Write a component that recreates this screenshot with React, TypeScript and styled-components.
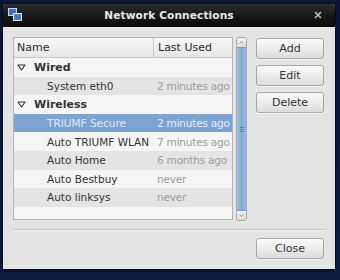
import React from 'react';
import styled, {createGlobalStyle} from 'styled-components';

const GlobalStyle = createGlobalStyle`
  html, body {
    margin: 0;
    padding: 0;
    background: linear-gradient(180deg, #0c1634 0%, #0e1c44 100%);
    font-family: "DejaVu Sans", "Liberation Sans", sans-serif;
  }
`

const Screen = styled.div`
  width: 340px;
  height: 280px;
  padding: 4px 5px 0 3px;
  box-sizing: border-box;
`

const Window = styled.div`
  width: 332px;
  height: 265px;
  display: flex;
  flex-direction: column;
  background: #e4e4e4;
  border-radius: 4px 4px 0 0;
  box-shadow: 0 0 0 1px #050a18, 0 2px 3px rgba(0, 0, 0, 0.6);
  overflow: hidden;
`

const TitleBar = styled.div`
  height: 22px;
  flex: none;
  display: grid;
  grid-template-columns: 22px 1fr 22px;
  align-items: center;
  background: linear-gradient(180deg, #2c2c2e 0%, #151516 60%, #0c0c0c 100%);
  border-bottom: 1px solid #000;
`

const Title = styled.div`
  text-align: center;
  color: #e8e8e8;
  font-size: 10.6px;
  font-weight: bold;
  letter-spacing: 0.1px;
`

const Body = styled.div`
  flex: 1;
  display: flex;
  flex-direction: column;
  padding: 10px 11px 0 10px;
`

const Main = styled.div`
  display: flex;
  gap: 3px;
`

const Tree = styled.div`
  width: 223px;
  height: 183px;
  box-sizing: border-box;
  border: 1px solid #b4b4b4;
  background: #f5f5f5;
  display: flex;
  flex-direction: column;
  overflow: hidden;
`

const HeaderRow = styled.div`
  height: 19px;
  flex: none;
  display: grid;
  grid-template-columns: 139px 1fr;
  background: linear-gradient(180deg, #f7f7f7 0%, #e6e6e6 100%);
  border-bottom: 1px solid #c9c9c9;
`

const HeaderCell = styled.div<{$divider?: boolean}>`
  font-size: 11px;
  color: #2a2a2a;
  display: flex;
  align-items: center;
  padding-left: ${p => (p.$divider ? '4px' : '3px')};
  border-left: ${p => (p.$divider ? '1px solid #c4c4c4' : 'none')};
`

const Row = styled.div<{$alt?: boolean; $selected?: boolean}>`
  height: 18.6px;
  flex: none;
  display: grid;
  grid-template-columns: 140px 1fr;
  align-items: center;
  font-size: 10.5px;
  background: ${p => (p.$selected ? '#7ca3d4' : p.$alt ? '#e4e4e4' : '#f5f5f5')};
`

const NameCell = styled.div<{$group?: boolean; $selected?: boolean}>`
  display: flex;
  align-items: center;
  gap: 8px;
  padding-left: ${p => (p.$group ? '3px' : '33px')};
  font-weight: ${p => (p.$group ? 'bold' : 'normal')};
  font-size: ${p => (p.$group ? '11px' : '10.5px')};
  color: ${p => (p.$selected ? '#dfe9f6' : '#333')};
  white-space: nowrap;
`

const UsedCell = styled.div<{$selected?: boolean}>`
  padding-left: 3px;
  letter-spacing: -0.2px;
  color: ${p => (p.$selected ? '#e3ecf8' : '#9c9c9c')};
  white-space: nowrap;
`

const ScrollBar = styled.div`
  width: 11px;
  height: 184px;
  box-sizing: border-box;
  border: 1px solid #a9a9a9;
  border-radius: 3px;
  background: #dcdcdc;
  display: flex;
  flex-direction: column;
  overflow: hidden;
`

const Stepper = styled.div`
  height: 9px;
  flex: none;
  display: flex;
  align-items: center;
  justify-content: center;
  background: linear-gradient(180deg, #f2f2f2, #dadada);
`

const Thumb = styled.div`
  flex: 1;
  display: flex;
  flex-direction: column;
  align-items: center;
  justify-content: center;
  gap: 1px;
  background: linear-gradient(90deg, #9fbde4 0%, #82a8da 50%, #9ab9e2 100%);
  border-top: 1px solid #7a9ccc;
  border-bottom: 1px solid #7a9ccc;
`

const Grip = styled.div`
  width: 4px;
  height: 1px;
  background: #5f82b6;
`

const Buttons = styled.div`
  margin-left: 6px;
  margin-top: 1px;
  display: flex;
  flex-direction: column;
  gap: 6px;
`

const Button = styled.button`
  width: 68px;
  height: 21px;
  box-sizing: border-box;
  border: 1px solid #a6a6a6;
  border-radius: 3px;
  background: linear-gradient(180deg, #fafafa 0%, #ececec 50%, #dcdcdc 100%);
  font-family: "DejaVu Sans", "Liberation Sans", sans-serif;
  font-size: 11px;
  color: #333;
  padding: 0;
  box-shadow: 0 1px 0 rgba(255, 255, 255, 0.6);
`

const Separator = styled.div`
  margin: 8px -2px 0 -1px;
  height: 1px;
  background: #c8c8c8;
  border-bottom: 1px solid #f2f2f2;
`

const Footer = styled.div`
  display: flex;
  justify-content: flex-end;
  padding-top: 7px;
`

function AppIcon() {
  return (
    <svg width="14" height="14" viewBox="0 0 14 14" style={{marginLeft: 5}}>
      <rect x="0.5" y="0.5" width="8" height="7" fill="#5d86c4" stroke="#c9d6ea" />
      <rect x="1.5" y="1.5" width="6" height="5" fill="#3d6cb5" />
      <rect x="5.5" y="5.5" width="8" height="7" fill="#6d93cf" stroke="#d6e0ef" />
      <rect x="6.5" y="6.5" width="6" height="5" fill="#4a77bd" />
    </svg>
  );
}

function CloseIcon() {
  return (
    <svg width="8" height="8" viewBox="0 0 8 8" style={{justifySelf: 'start', marginLeft: 1}}>
      <path d="M1 1 L7 7 M7 1 L1 7" stroke="#bdbdbd" strokeWidth="1.6" />
    </svg>
  );
}

function Expander() {
  return (
    <svg width="9" height="7" viewBox="0 0 9 7">
      <path d="M1 1 H8 L4.5 6 Z" fill="none" stroke="#333" strokeWidth="1.1" strokeLinejoin="round" />
    </svg>
  );
}

function Chevron({up}: {up?: boolean}) {
  return (
    <svg width="5" height="3" viewBox="0 0 5 3">
      <path d={up ? 'M0.5 2.5 L2.5 0.5 L4.5 2.5' : 'M0.5 0.5 L2.5 2.5 L4.5 0.5'} fill="none" stroke="#8a8a8a" strokeWidth="0.9" />
    </svg>
  );
}

type Entry = {name: string; used?: string; group?: boolean; selected?: boolean};

const entries: Entry[] = [
  {name: 'Wired', group: true},
  {name: 'System eth0', used: '2 minutes ago'},
  {name: 'Wireless', group: true},
  {name: 'TRIUMF Secure', used: '2 minutes ago', selected: true},
  {name: 'Auto TRIUMF WLAN', used: '7 minutes ago'},
  {name: 'Auto Home', used: '6 months ago'},
  {name: 'Auto Bestbuy', used: 'never'},
  {name: 'Auto linksys', used: 'never'},
];

export default function App(): React.ReactElement {
  return (
    <Screen>
      <GlobalStyle />
      <Window>
        <TitleBar>
          <AppIcon />
          <Title>Network Connections</Title>
          <CloseIcon />
        </TitleBar>
        <Body>
          <Main>
            <Tree>
              <HeaderRow>
                <HeaderCell>Name</HeaderCell>
                <HeaderCell $divider>Last Used</HeaderCell>
              </HeaderRow>
              {entries.map((e, i) => (
                <Row key={e.name} $alt={i % 2 === 1} $selected={e.selected}>
                  <NameCell $group={e.group} $selected={e.selected}>
                    {e.group && <Expander />}
                    {e.name}
                  </NameCell>
                  <UsedCell $selected={e.selected}>{e.used}</UsedCell>
                </Row>
              ))}
            </Tree>
            <ScrollBar>
              <Stepper><Chevron up /></Stepper>
              <Thumb>
                <Grip />
                <Grip />
                <Grip />
              </Thumb>
              <Stepper><Chevron /></Stepper>
            </ScrollBar>
            <Buttons>
              <Button>Add</Button>
              <Button>Edit</Button>
              <Button>Delete</Button>
            </Buttons>
          </Main>
          <Separator />
          <Footer>
            <Button>Close</Button>
          </Footer>
        </Body>
      </Window>
    </Screen>
  );
}
